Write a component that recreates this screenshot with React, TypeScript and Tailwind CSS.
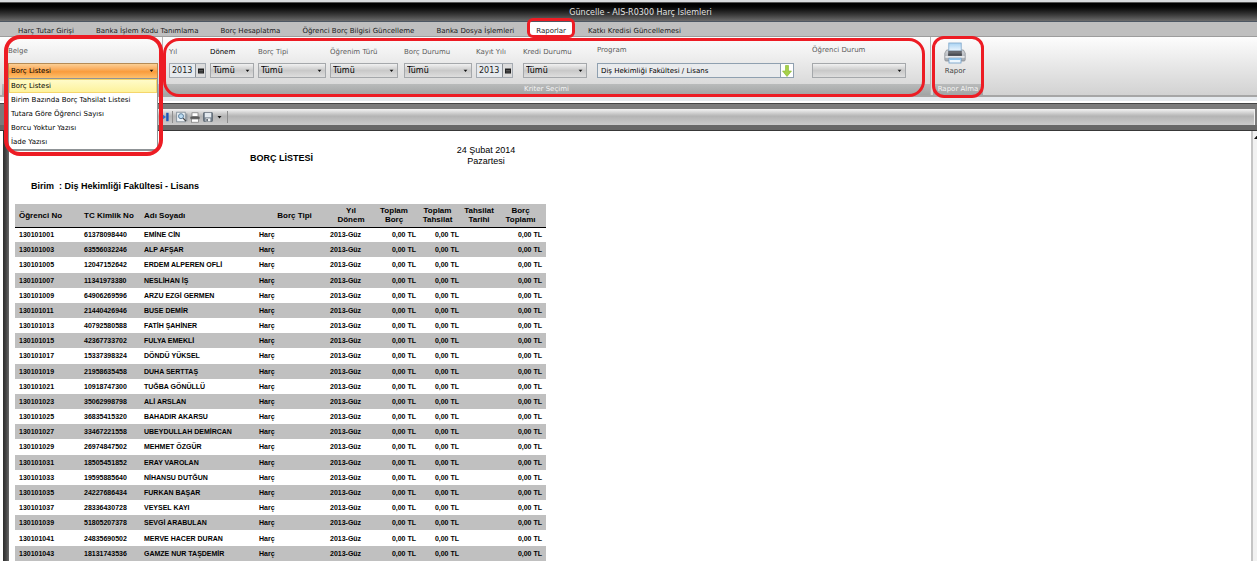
import { ReactNode, useState } from "react";

type Student = { no: string; tc: string; name: string }

const tabs = [
    "Harç Tutar Girişi",
    "Banka İşlem Kodu Tanımlama",
    "Borç Hesaplatma",
    "Öğrenci Borç Bilgisi Güncelleme",
    "Banka Dosya İşlemleri",
    "Raporlar",
    "Katkı Kredisi Güncellemesi",
]

const documents = [
    "Borç Listesi",
    "Birim Bazında Borç Tahsilat Listesi",
    "Tutara Göre Öğrenci Sayısı",
    "Borcu Yoktur Yazısı",
    "İade Yazısı",
]

const students: Student[] = [
    { no: "130101001", tc: "61378098440", name: "EMİNE CİN" },
    { no: "130101003", tc: "63556032246", name: "ALP AFŞAR" },
    { no: "130101005", tc: "12047152642", name: "ERDEM ALPEREN OFLİ" },
    { no: "130101007", tc: "11341973380", name: "NESLİHAN İŞ" },
    { no: "130101009", tc: "64906269596", name: "ARZU EZGİ GERMEN" },
    { no: "130101011", tc: "21440426946", name: "BUSE DEMİR" },
    { no: "130101013", tc: "40792580588", name: "FATİH ŞAHİNER" },
    { no: "130101015", tc: "42367733702", name: "FULYA EMEKLİ" },
    { no: "130101017", tc: "15337398324", name: "DÖNDÜ YÜKSEL" },
    { no: "130101019", tc: "21958635458", name: "DUHA SERTTAŞ" },
    { no: "130101021", tc: "10918747300", name: "TUĞBA GÖNÜLLÜ" },
    { no: "130101023", tc: "35062998798", name: "ALİ ARSLAN" },
    { no: "130101025", tc: "36835415320", name: "BAHADIR AKARSU" },
    { no: "130101027", tc: "33467221558", name: "UBEYDULLAH DEMİRCAN" },
    { no: "130101029", tc: "26974847502", name: "MEHMET ÖZGÜR" },
    { no: "130101031", tc: "18505451852", name: "ERAY VAROLAN" },
    { no: "130101033", tc: "19595885640", name: "NİHANSU DUTĞUN" },
    { no: "130101035", tc: "24227686434", name: "FURKAN BAŞAR" },
    { no: "130101037", tc: "28336430728", name: "VEYSEL KAYI" },
    { no: "130101039", tc: "51805207378", name: "SEVGİ ARABULAN" },
    { no: "130101041", tc: "24835690502", name: "MERVE HACER DURAN" },
    { no: "130101043", tc: "18131743536", name: "GAMZE NUR TAŞDEMİR" },
]

function Caret() {
    return (
        <svg viewBox="0 0 5 3" className="pointer-events-none absolute right-1 top-1/2 h-[3px] w-[5px] -translate-y-1/2">
            <path d="M0.5 0h4L2.5 2.6z" fill="#111" />
        </svg>
    )
}

function Field({ id, label, className, dark, children }: { id: string; label: string; className: string; dark?: boolean; children: ReactNode }) {
    return (
        <div className={`flex shrink-0 flex-col justify-between whitespace-nowrap ${className}`}>
            <label htmlFor={id} className={dark ? "text-black" : "text-[#5c5c5c]"}>{label}</label>
            {children}
        </div>
    )
}

function SelectBox({ id, value = "Tümü" }: { id: string; value?: string }) {
    return (
        <div className="relative h-[15px]">
            <select id={id} className="block h-full w-full appearance-none border border-[#a5a8ab] bg-linear-to-b from-[#f1f1f1] via-[#c9c9c9] via-50% to-[#dedede] pl-[2px] text-[8px] text-black">
                <option>{value}</option>
            </select>
            <Caret />
        </div>
    )
}

function YearBox({ id }: { id: string }) {
    return (
        <div className="flex h-[15px] border border-[#a5abb2] bg-[#e6eaee]">
            <input id={id} type="text" defaultValue="2013" className="w-full min-w-0 flex-1 bg-transparent pl-[2px] text-[8px]" />
            <button type="button" aria-label="Takvim" className="flex w-[10px] items-center justify-center border-l border-[#8b9096] bg-[#dcdcdc]">
                <svg viewBox="0 0 6 6" className="size-[6px]">
                    <rect y="0.5" width="6" height="5" fill="#222" />
                    <path d="M1 2.5h4M1 4h4" stroke="#777" strokeWidth="0.6" />
                </svg>
            </button>
        </div>
    )
}

function Caption({ children }: { children?: ReactNode }) {
    return (
        <div className="h-[11px] bg-linear-to-b from-[#b9bbbb] to-[#a2a4a4] text-center leading-[11px] text-[#f4f4f4]">
            {children}
        </div>
    )
}

function Marker({ className }: { className: string }) {
    return <div className={`pointer-events-none absolute z-20 border-[#ed1c24] ${className}`} />
}

function PrinterIcon() {
    return (
        <svg viewBox="0 0 22 22" className="h-[22px] w-[22px]">
            <defs>
                <linearGradient id="paper" x1="0" y1="0" x2="0" y2="1">
                    <stop offset="0" stopColor="#a9d3f3" />
                    <stop offset="1" stopColor="#eef7fe" />
                </linearGradient>
                <linearGradient id="body" x1="0" y1="0" x2="0" y2="1">
                    <stop offset="0" stopColor="#d3d6da" />
                    <stop offset="1" stopColor="#a4a9af" />
                </linearGradient>
            </defs>
            <path d="M2.6 8h16.8l1.8 3.2v6.6q0 1.2-1.2 1.2H2q-1.2 0-1.2-1.2v-6.6z" fill="url(#body)" stroke="#8f949b" strokeWidth="0.8" />
            <rect x="4.8" y="1" width="12.4" height="8" fill="url(#paper)" stroke="#7fa6c8" strokeWidth="0.8" />
            <rect x="4.2" y="8.8" width="13.6" height="5" fill="#66696f" />
            <rect x="4.2" y="11.6" width="13.6" height="2.2" fill="#4b4e54" />
            <rect x="1.4" y="14" width="19.2" height="1.8" fill="#e6e8ea" />
            <rect x="5" y="16.2" width="12" height="4.8" fill="#eef7fe" stroke="#6d9cc6" strokeWidth="0.8" />
            <rect x="5.4" y="16.4" width="11.2" height="1.6" fill="#8cc4ee" />
        </svg>
    )
}

export default function App() {
    const [activeTab, setActiveTab] = useState("Raporlar")
    const [selected, setSelected] = useState("Borç Listesi")

    return (
        <div className="flex h-screen flex-col overflow-hidden bg-white font-['DejaVu_Sans',sans-serif] text-[7px] leading-[9px] text-[#1c1c1c]">
            <header className="border-t-2 border-[#d9dbde]">
                <h1 className="h-5 border-t border-b border-t-[#555] border-b-[#4d5763] bg-linear-to-b from-black to-[#6c6c6c] pt-px pl-6 text-center text-[8px] leading-[18px] text-[#e2e2e2]">
                    Güncelle - AIS-R0300 Harç Islemleri
                </h1>
                <nav className="flex h-[15px] border-b border-[#9d9d9d] bg-[#bfbfbf] pl-[7px]">
                    {tabs.map(tab => (
                        <div key={tab} className="relative flex px-1">
                            <button
                                type="button"
                                onClick={() => setActiveTab(tab)}
                                className={`whitespace-nowrap px-[7px] pt-[4px] ${activeTab === tab ? "bg-white" : ""}`}>{tab}</button>
                            {tab === "Raporlar" ? <Marker className="inset-x-[2px] -top-1 -bottom-[2px] rounded-md border-[3px]" /> : ""}
                        </div>
                    ))}
                </nav>
            </header>

            <section className="flex h-[60px] shrink-0 border-b-2 border-[#a6a6a6] bg-linear-to-b from-[#fdfdfd] to-[#d2d2d2] pl-[2px]">
                <div className="relative flex w-[161px] flex-col border-r border-[#b5b5b5]">
                    <div className="flex flex-1 flex-col justify-between pt-[10px] pr-1 pb-[5px] pl-[6px]">
                        <label htmlFor="belge" className="text-[#5c5c5c]">Belge</label>
                        <div className="relative h-4">
                            <select
                                id="belge"
                                value={selected}
                                onChange={e => setSelected(e.target.value)}
                                className="block h-full w-full appearance-none border border-[#b58b56] bg-linear-to-b from-[#fbcf94] via-[#f99c3c] via-55% to-[#fdc06c] pl-[2px] text-black">
                                {documents.map(d => <option key={d}>{d}</option>)}
                            </select>
                            <Caret />
                            <ul className="absolute inset-x-0 top-[15px] z-10 border border-b-2 border-[#8f9396] bg-white">
                                {documents.map(d => (
                                    <li key={d}>
                                        <button
                                            type="button"
                                            onClick={() => setSelected(d)}
                                            className={`block h-[14px] w-full border pl-px text-left text-black ${d === selected ? "border-[#f5d66b] bg-linear-to-b from-[#fffbc8] to-[#fdf29b]" : "border-transparent"}`}>{d}</button>
                                    </li>
                                ))}
                            </ul>
                        </div>
                    </div>
                    <Caption />
                    <Marker className="-top-[2px] -right-px -bottom-[61px] left-[2px] rounded-2xl border-4" />
                </div>

                <div className="relative flex w-[768px] flex-col border-r border-[#b5b5b5]">
                    <div className="flex flex-1 pt-[11px] pb-[6px] pl-[6px]">
                        <Field id="yil" label="Yıl" className="w-[37px]"><YearBox id="yil" /></Field>
                        <Field id="donem" label="Dönem" dark className="ml-1 w-[44px]"><SelectBox id="donem" /></Field>
                        <Field id="borcTipi" label="Borç Tipi" className="ml-1 w-[68px]"><SelectBox id="borcTipi" /></Field>
                        <Field id="ogrenim" label="Öğrenim Türü" className="ml-1 w-[68px]"><SelectBox id="ogrenim" /></Field>
                        <Field id="borcDurumu" label="Borç Durumu" className="ml-[6px] w-[68px]"><SelectBox id="borcDurumu" /></Field>
                        <Field id="kayit" label="Kayıt Yılı" className="ml-1 w-[37px]"><YearBox id="kayit" /></Field>
                        <Field id="kredi" label="Kredi Durumu" className="ml-[10px] w-[64px]"><SelectBox id="kredi" /></Field>
                        <Field id="program" label="Program" className="-mt-[2px] ml-[10px] w-[197px]">
                            <div className="flex h-[15px] border border-[#8fa0b0] bg-[#e9ebed]">
                                <input id="program" type="text" defaultValue="Diş Hekimliği Fakültesi / Lisans" className="min-w-0 flex-1 bg-transparent pt-[2px] pl-[3px] text-black" />
                                <button type="button" aria-label="Program seç" className="flex w-[13px] items-center justify-center border-l border-[#8fa0b0] bg-white">
                                    <svg viewBox="0 0 10 12" className="h-3 w-[10px]">
                                        <path d="M3.5 0.5h3v5.5h3L5 11.5 0.5 6h3z" fill="#a6d14a" stroke="#86b52c" strokeWidth="0.6" />
                                    </svg>
                                </button>
                            </div>
                        </Field>
                        <Field id="durum" label="Öğrenci Durum" className="-mt-[2px] ml-[18px] w-[94px]"><SelectBox id="durum" value="" /></Field>
                    </div>
                    <Caption>Kriter Seçimi</Caption>
                    <Marker className="top-px right-[5px] -bottom-[2px] left-0 rounded-2xl border-[3px]" />
                </div>

                <div className="relative ml-[2px] flex w-[50px] flex-col">
                    <button type="button" className="flex flex-1 flex-col items-center pt-[5px] pr-[6px] text-[#444]">
                        <PrinterIcon />
                        <span className="mt-[3px]">Rapor</span>
                    </button>
                    <Caption>Rapor Alma</Caption>
                    <Marker className="-inset-x-px -top-px -bottom-[3px] rounded-xl border-[3px]" />
                </div>
            </section>

            <div className="h-[6px] shrink-0 border-t-4 border-[#e6eaee] bg-white" />

            <main className="flex min-h-0 flex-1 flex-col border-t border-[#444] bg-[#7b7b7b]">
                <div className="mt-[5px] mr-[2px] ml-[9px] flex h-4 shrink-0 items-center border-r border-[#eee] bg-linear-to-b from-[#f4f4f4] via-[#b4b4b4] via-45% to-[#cbcbcb] pl-[151px]">
                    <button type="button" aria-label="Son sayfa">
                        <svg viewBox="0 0 9 10" className="h-[10px] w-[9px]">
                            <path d="M0.5 1L6 5L0.5 9z" fill="#2f6fd0" />
                            <rect x="6.2" y="0.8" width="2.4" height="8.4" fill="#1f56b5" />
                        </svg>
                    </button>
                    <div className="ml-[3px] h-3 w-px bg-[#8d8d8d]" />
                    <button type="button" aria-label="Önizleme" className="ml-[3px]">
                        <svg viewBox="0 0 12 12" className="size-3">
                            <rect x="0.7" y="1.2" width="8.5" height="9.6" fill="#eef3f7" stroke="#7b8792" strokeWidth="0.8" />
                            <path d="M10.8 2.5v7.8" stroke="#7b8792" strokeWidth="0.9" />
                            <circle cx="5" cy="5.2" r="2.5" fill="#bcdcf2" stroke="#5d7f9c" strokeWidth="1" />
                            <path d="M7 7.2l3 3" stroke="#444" strokeWidth="1.2" />
                        </svg>
                    </button>
                    <button type="button" aria-label="Yazdır" className="ml-[2px]">
                        <svg viewBox="0 0 10 11" className="h-[11px] w-[10px]">
                            <rect x="2" y="0.8" width="6" height="3.8" fill="#fff" stroke="#777" strokeWidth="0.7" />
                            <rect x="0.4" y="4.6" width="9.2" height="2.6" rx="0.6" fill="#5a5a5a" />
                            <rect x="1.6" y="7" width="6.8" height="3.2" fill="#fff" stroke="#777" strokeWidth="0.7" />
                        </svg>
                    </button>
                    <button type="button" aria-label="Kaydet" className="ml-[3px] flex items-center gap-1">
                        <svg viewBox="0 0 10 10" className="size-[10px]">
                            <rect x="0.5" y="0.5" width="9" height="9" rx="0.8" fill="#6f7b87" stroke="#55606b" strokeWidth="0.7" />
                            <rect x="1.8" y="0.8" width="6.4" height="4.6" fill="#e3e9ee" />
                            <rect x="2.6" y="6.4" width="4.8" height="3" fill="#f2f4f5" />
                            <rect x="3.4" y="7" width="1.4" height="2.2" fill="#48525c" />
                        </svg>
                        <svg viewBox="0 0 5 3" className="h-[3px] w-[5px]"><path d="M0.5 0h4L2.5 2.6z" fill="#111" /></svg>
                    </button>
                    <div className="ml-[5px] h-3 w-px bg-[#8d8d8d]" />
                </div>
                <div className="h-[6px] shrink-0 border-b border-[#383838] bg-[#686868]" />

                <div className="flex min-h-0 flex-1 bg-white">
                    <div className="ml-[3px] w-[6px] shrink-0 bg-linear-to-r from-[#2e2e2e] via-[#444] to-[#6b6b6b]" />
                    <article className="flex-1 overflow-hidden pl-[6px] font-['Liberation_Sans',sans-serif] text-black">
                        <div className="flex pt-[14px] pl-[235px] text-[9px] leading-[11px]">
                            <h2 className="w-[190px] pt-2 font-bold">BORÇ LİSTESİ</h2>
                            <p className="w-[92px] text-center">24 Şubat 2014<br />Pazartesi</p>
                        </div>
                        <p className="pt-[14px] pl-4 text-[9px] leading-[11px] font-bold whitespace-pre">Birim  : Diş Hekimliği Fakültesi - Lisans</p>

                        <table className="mt-3 h-[357px] w-[531px] table-fixed border-collapse text-left font-bold">
                            <colgroup>
                                <col className="w-[66px]" />
                                <col className="w-[60px]" />
                                <col className="w-[115px]" />
                                <col className="w-[74px]" />
                                <col className="w-[42px]" />
                                <col className="w-[44px]" />
                                <col className="w-[43px]" />
                                <col className="w-[40px]" />
                                <col className="w-[47px]" />
                            </colgroup>
                            <thead>
                                <tr className="h-[23px] border-b border-black bg-[#c0c0c0] text-[8px] leading-[9px]">
                                    <th className="pl-1">Öğrenci No</th>
                                    <th className="pl-[3px]">TC Kimlik No</th>
                                    <th className="pl-[3px]">Adı Soyadı</th>
                                    <th className="pl-[3px] text-center">Borç Tipi</th>
                                    <th className="text-center">Yıl<br />Dönem</th>
                                    <th className="text-center">Toplam<br />Borç</th>
                                    <th className="text-center">Toplam<br />Tahsilat</th>
                                    <th className="text-center">Tahsilat<br />Tarihi</th>
                                    <th className="pr-1 text-center">Borç<br />Toplamı</th>
                                </tr>
                            </thead>
                            <tbody>
                                {students.map(s => (
                                    <tr key={s.no} className="h-[15px] whitespace-nowrap even:bg-[#c0c0c0]">
                                        <td className="pl-1">{s.no}</td>
                                        <td className="pl-[3px]">{s.tc}</td>
                                        <td className="pl-[3px]">{s.name}</td>
                                        <td className="pl-[3px]">Harç</td>
                                        <td>2013-Güz</td>
                                        <td className="text-right">0,00 TL</td>
                                        <td className="text-right">0,00 TL</td>
                                        <td></td>
                                        <td className="pr-1 text-right">0,00 TL</td>
                                    </tr>
                                ))}
                            </tbody>
                        </table>
                    </article>
                    <div className="w-[6px] shrink-0 overflow-hidden border-l-2 border-[#c4c4c4] bg-[#f1f1f1] pt-1 pl-px">
                        <svg viewBox="0 0 7 4" className="h-1 w-[7px]"><path d="M3.5 0L7 4H0z" fill="#111" /></svg>
                    </div>
                </div>
            </main>
        </div>
    );
}
